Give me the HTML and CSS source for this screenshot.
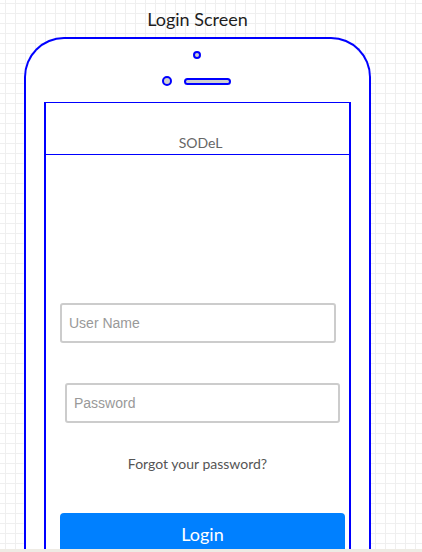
FILE: index.html
```html
<!DOCTYPE html>
<html>
<head>
<meta charset="utf-8">
<link rel="stylesheet" href="styles.css">
</head>
<body>
<div class="page">
  <div class="title">Login Screen</div>
  <div class="phone">
    <div class="sensors">
      <div class="cam"></div>
      <div class="sensor-row">
        <div class="lens"></div>
        <div class="speaker"></div>
      </div>
    </div>
    <div class="screen">
      <div class="header">SODeL</div>
      <div class="content">
        <div class="field field-user">User Name</div>
        <div class="field field-pass">Password</div>
        <div class="forgot">Forgot your password?</div>
        <div class="login-btn">Login</div>
      </div>
    </div>
  </div>
</div>
<div class="bottom-strip"></div>
</body>
</html>
```

FILE: styles.css
```css
html, body {
  margin: 0;
  padding: 0;
}
body {
  width: 422px;
  height: 552px;
  overflow: hidden;
  background-color: #ffffff;
  background-image:
    linear-gradient(to right, #efefef 1px, transparent 1px),
    linear-gradient(to bottom, #efefef 1px, transparent 1px);
  background-size: 10px 10px;
  background-position: 5px 3px;
  font-family: Lato, "Liberation Sans", sans-serif;
}
.page {
  width: 347px;
  margin-left: 24px;
}
.title {
  height: 37px;
  padding-top: 8px;
  box-sizing: border-box;
  line-height: 22px;
  font-size: 18px;
  color: #1e1e1e;
  text-align: center;
}
.phone {
  box-sizing: border-box;
  width: 347px;
  height: 515px;
  overflow: hidden;
  border: 2px solid #0000ff;
  border-bottom: none;
  border-radius: 40px 40px 0 0;
  background: #ffffff;
}
.sensors {
  display: flex;
  flex-direction: column;
  align-items: center;
  padding-top: 12px;
}
.cam {
  box-sizing: border-box;
  width: 8px;
  height: 8px;
  border: 2px solid #0000ff;
  border-radius: 50%;
  background: #d0d0d0;
  margin-left: -1px;
}
.sensor-row {
  display: flex;
  align-items: center;
  gap: 12px;
  margin-top: 17px;
  margin-left: -3px;
}
.lens {
  box-sizing: border-box;
  width: 10px;
  height: 10px;
  border: 2px solid #0000ff;
  border-radius: 50%;
  background: #d0d0d0;
}
.speaker {
  box-sizing: border-box;
  width: 47px;
  height: 7px;
  border: 2px solid #0000ff;
  border-radius: 4px;
  background: #d0d0d0;
}
.screen {
  box-sizing: border-box;
  width: 307px;
  margin: 16px 0 0 18px;
  height: 450px;
  overflow: hidden;
  border-top: 1px solid #0000ff;
  border-left: 2px solid #0000ff;
  border-right: 2px solid #0000ff;
  background: #ffffff;
}
.header {
  box-sizing: border-box;
  height: 52px;
  padding-top: 32px;
  padding-left: 6px;
  line-height: 16px;
  font-size: 14px;
  color: #666666;
  text-align: center;
  border-bottom: 1px solid #0000ff;
}
.content {
  display: flex;
  flex-direction: column;
  align-items: flex-start;
}
.field {
  box-sizing: border-box;
  height: 40px;
  border: 2px solid #cccccc;
  border-radius: 3px;
  padding-left: 7px;
  line-height: 36px;
  font-family: "Liberation Sans", Arial, sans-serif;
  font-size: 14px;
  color: #999999;
}
.field-user {
  width: 276px;
  margin: 148px 0 0 14px;
}
.field-pass {
  width: 275px;
  margin: 40px 0 0 19px;
}
.forgot {
  align-self: stretch;
  margin-top: 32px;
  line-height: 18px;
  font-size: 14px;
  color: #555555;
  text-align: center;
}
.login-btn {
  box-sizing: border-box;
  width: 285px;
  height: 42px;
  margin: 40px 0 0 14px;
  border-radius: 4px;
  background: #0080ff;
  color: #ffffff;
  font-size: 18px;
  line-height: 42px;
  text-align: center;
}
.bottom-strip {
  position: fixed;
  left: 0;
  right: 0;
  bottom: 0;
  height: 3px;
  background: #eeebe4;
}
```
